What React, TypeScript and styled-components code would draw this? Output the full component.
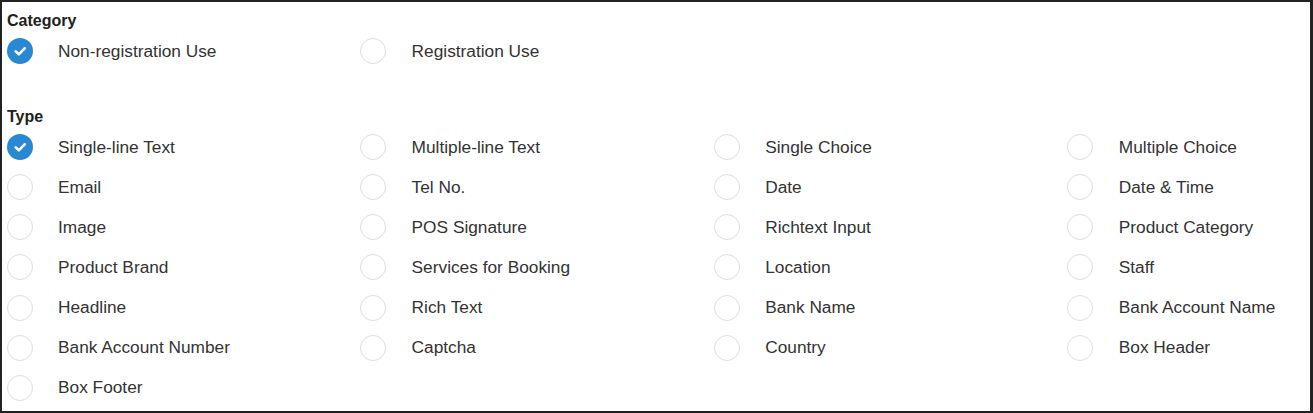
import { createGlobalStyle } from "styled-components";
import styled from "styled-components";

const GlobalStyle = createGlobalStyle`
    html, body {
        margin: 0;
        padding: 0;
        background: #ffffff;
    }
`;

const Frame = styled.div`
    box-sizing: border-box;
    width: 1313px;
    height: 413px;
    border: 2px solid #222;
    border-right-width: 3px;
    padding: 9px 0 0 4px;
    font-family: "Liberation Sans", Arial, sans-serif;
    background: #fff;
    overflow: hidden;
`;

const Section = styled.div<{ $gap?: number }>`
    margin-bottom: ${(p) => p.$gap ?? 0}px;
`;

const Heading = styled.div`
    font-size: 16px;
    font-weight: bold;
    line-height: 20px;
    color: #222;
    padding-left: 1px;
`;

const Grid = styled.div`
    display: grid;
    grid-template-columns: repeat(3, 353.6px) minmax(0, 1fr);
`;

const Option = styled.label`
    display: flex;
    align-items: center;
    height: 40.1px;
    cursor: pointer;
`;

const Circle = styled.span<{ $checked?: boolean }>`
    box-sizing: border-box;
    width: 26px;
    height: 26px;
    margin-left: 0.5px;
    border-radius: 50%;
    flex: none;
    display: flex;
    align-items: center;
    justify-content: center;
    background: ${(p) => (p.$checked ? "#2a88d0" : "#fff")};
    border: ${(p) => (p.$checked ? "none" : "1.5px solid #dedede")};
`;

const Label = styled.span`
    margin-left: 25.5px;
    font-size: 17.3px;
    color: #333;
    white-space: nowrap;
`;

function Radio({ label, checked = false }: { label: string; checked?: boolean }) {
    return (
        <Option>
            <Circle $checked={checked}>
                {checked && (
                    <svg width="26" height="26" viewBox="0 0 26 26">
                        <path d="M8.6 13.4 L11.8 16.3 L17.6 10.3" fill="none" stroke="#fff" strokeWidth="2.6" strokeLinecap="round" strokeLinejoin="round" />
                    </svg>
                )}
            </Circle>
            <Label>{label}</Label>
        </Option>
    );
}

const types = [
    "Single-line Text", "Multiple-line Text", "Single Choice", "Multiple Choice",
    "Email", "Tel No.", "Date", "Date & Time",
    "Image", "POS Signature", "Richtext Input", "Product Category",
    "Product Brand", "Services for Booking", "Location", "Staff",
    "Headline", "Rich Text", "Bank Name", "Bank Account Name",
    "Bank Account Number", "Captcha", "Country", "Box Header",
    "Box Footer",
];

function App() {
    return (
        <>
            <GlobalStyle />
            <Frame>
                <Section $gap={36}>
                    <Heading>Category</Heading>
                    <Grid>
                        <Radio label="Non-registration Use" checked />
                        <Radio label="Registration Use" />
                    </Grid>
                </Section>
                <Section>
                    <Heading>Type</Heading>
                    <Grid>
                        {types.map((t, i) => (
                            <Radio key={t} label={t} checked={i === 0} />
                        ))}
                    </Grid>
                </Section>
            </Frame>
        </>
    );
}

export default App;
